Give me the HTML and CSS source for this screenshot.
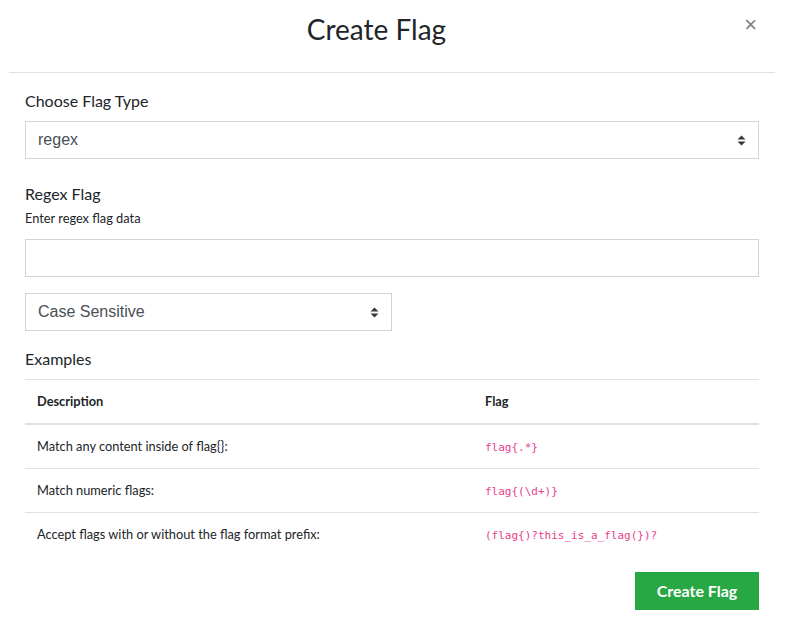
FILE: index.html
```html
<!DOCTYPE html>
<html>
<head>
<meta charset="utf-8">
<link rel="stylesheet" href="styles.css">
</head>
<body>
<div class="modal">
  <div class="modal-header">
    <h3 class="modal-title">Create Flag</h3>
    <button class="close" type="button" aria-label="Close">×</button>
  </div>
  <div class="modal-body">
    <div class="form-group">
      <label class="label">Choose Flag Type</label>
      <div class="select full">
        <span>regex</span>
        <svg class="caret" width="9" height="11" viewBox="0 0 9 11"><path d="M4.5 0.5 L8.5 4.5 L0.5 4.5 Z M0.5 6.5 L8.5 6.5 L4.5 10.5 Z" fill="#343a40"/></svg>
      </div>
    </div>
    <div class="form-group regex">
      <label class="label">Regex Flag</label>
      <small class="help">Enter regex flag data</small>
      <div class="input"></div>
    </div>
    <div class="form-group">
      <div class="select half">
        <span>Case Sensitive</span>
        <svg class="caret" width="9" height="11" viewBox="0 0 9 11"><path d="M4.5 0.5 L8.5 4.5 L0.5 4.5 Z M0.5 6.5 L8.5 6.5 L4.5 10.5 Z" fill="#343a40"/></svg>
      </div>
    </div>
    <div class="examples-title">Examples</div>
    <table class="table">
      <thead>
        <tr><th class="col-desc">Description</th><th>Flag</th></tr>
      </thead>
      <tbody>
        <tr><td>Match any content inside of flag{}:</td><td><code>flag{.*}</code></td></tr>
        <tr><td>Match numeric flags:</td><td><code>flag{(\d+)}</code></td></tr>
        <tr><td>Accept flags with or without the flag format prefix:</td><td><code>(flag{)?this_is_a_flag(})?</code></td></tr>
      </tbody>
    </table>
    <div class="actions">
      <button class="btn-success" type="button">Create Flag</button>
    </div>
  </div>
</div>
</body>
</html>
```
FILE: styles.css
```css
* { box-sizing: border-box; }
html, body { margin: 0; padding: 0; background: #fff; }
body {
  font-family: Lato, "Liberation Sans", sans-serif;
  color: #212529;
  font-size: 16px;
  line-height: 1.5;
}
.modal {
  margin-left: 9px;
  width: 766px;
}
.modal-header {
  display: flex;
  align-items: flex-start;
  padding: 10px 16px 0 16px;
  height: 73px;
  border-bottom: 1px solid #dee2e6;
}
.modal-title {
  flex: 1;
  margin: 0;
  text-align: center;
  font-size: 28px;
  font-weight: 400;
  line-height: 38px;
  color: #212529;
}
.close {
  width: 31px;
  border: 0;
  background: none;
  padding: 0 2px 0 0;
  margin: 2px 0 0 0;
  font-family: "Liberation Sans", sans-serif;
  font-size: 22px;
  line-height: 26px;
  color: #7d7d7d;
  text-align: right;
}
.modal-body {
  padding: 16px;
}
.form-group {
  margin-bottom: 16px;
  display: flex;
  flex-direction: column;
}
.form-group.regex { padding-top: 7px; }
.label {
  display: block;
  font-size: 16px;
  line-height: 24px;
  margin-bottom: 8px;
}
.regex .label { margin-bottom: 3px; }
.help {
  font-size: 12.8px;
  line-height: 19px;
  margin-bottom: 11px;
}
.select, .input {
  height: 38px;
  border: 1px solid #ced4da;
  background: #fff;
  display: flex;
  align-items: center;
  padding: 0 12px;
  font-family: "Liberation Sans", Arial, sans-serif;
  font-size: 16px;
  color: #495057;
}
.select { justify-content: space-between; }
.select.half { width: 367px; }
.examples-title {
  font-size: 16px;
  line-height: 24px;
  margin-bottom: 8px;
}
.table {
  width: 100%;
  border-collapse: collapse;
  font-size: 12.8px;
  line-height: 19px;
}
.table th, .table td {
  padding: 12px;
  height: 44px;
  text-align: left;
  border-top: 1px solid #dee2e6;
  vertical-align: middle;
}
.table th {
  font-weight: 700;
  border-bottom: 2px solid #dee2e6;
}
.col-desc { width: 448px; }
code {
  font-family: "DejaVu Sans Mono", monospace;
  font-size: 11px;
  line-height: 1;
  color: #e83e8c;
}
.actions {
  display: flex;
  justify-content: flex-end;
  margin-top: 15px;
}
.btn-success {
  background: #28a745;
  border: 1px solid #28a745;
  color: #fff;
  font-family: Lato, sans-serif;
  font-weight: 700;
  font-size: 16px;
  height: 38px;
  width: 124px;
  padding: 0;
  border-radius: 0;
}
```
